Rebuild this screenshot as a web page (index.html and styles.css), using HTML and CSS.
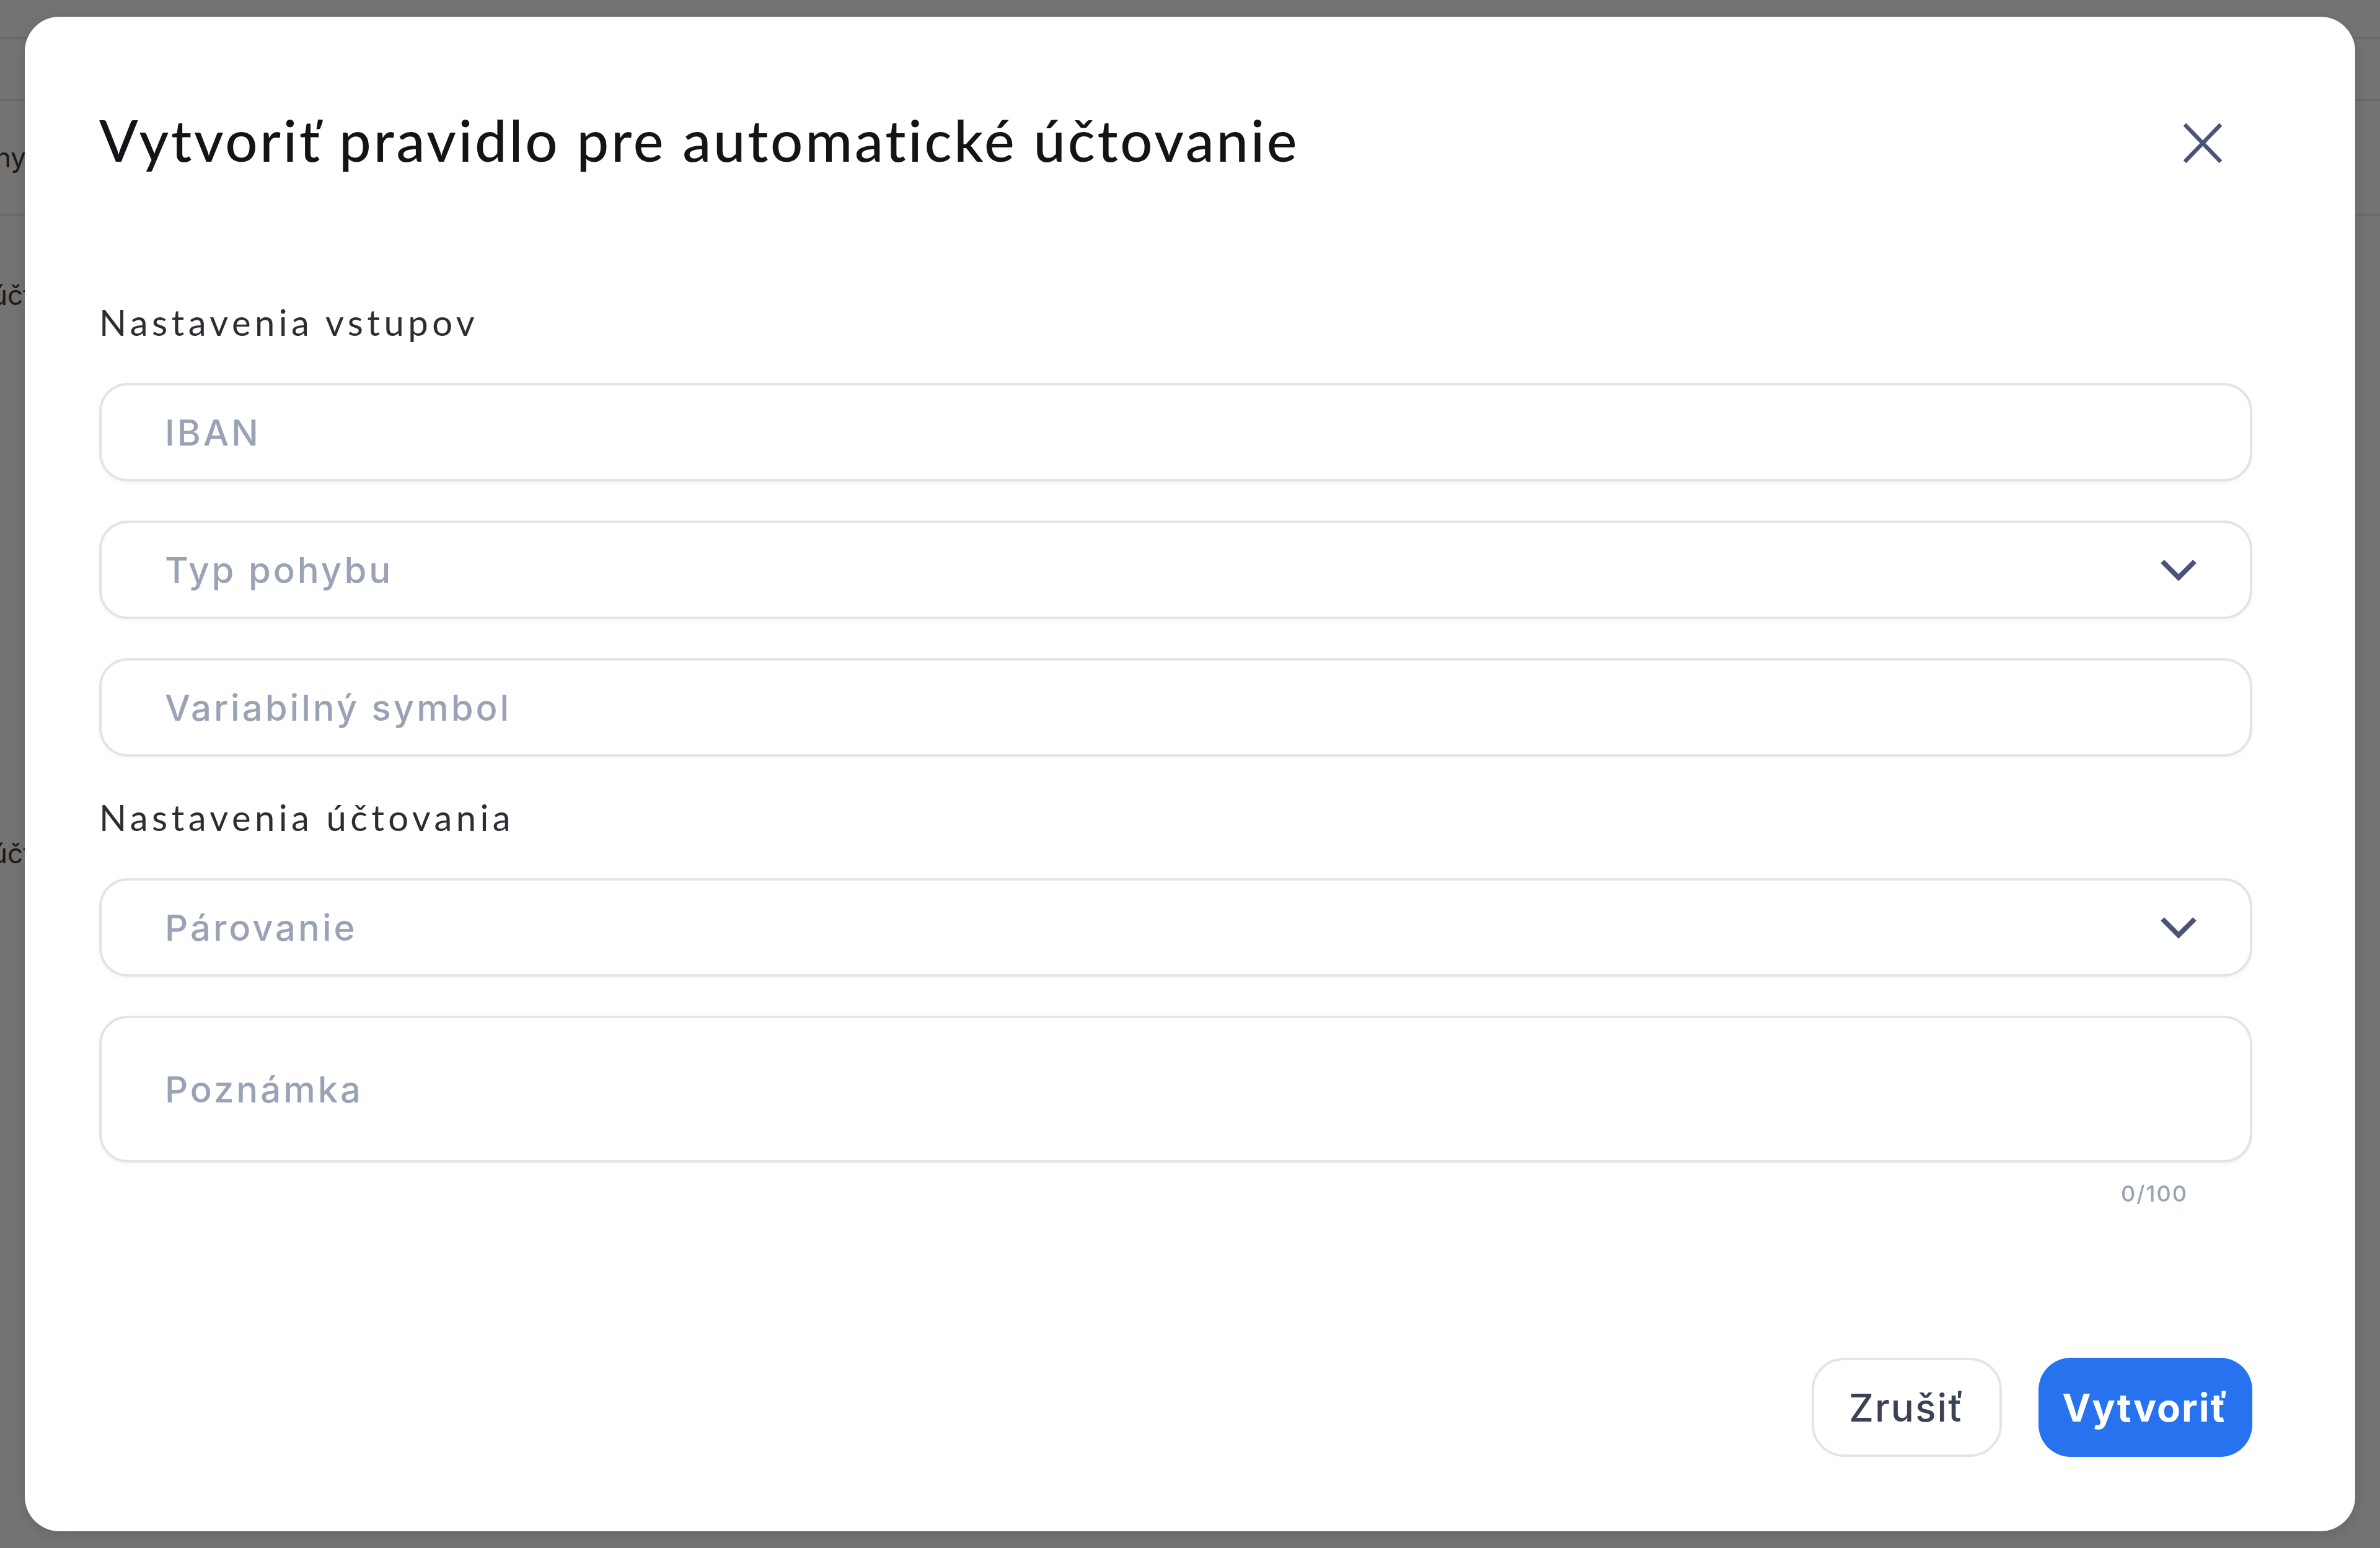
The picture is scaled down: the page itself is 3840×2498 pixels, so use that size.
FILE: index.html
```html
<!DOCTYPE html>
<html lang="sk">
<head>
  <meta charset="UTF-8" />
  <meta name="viewport" content="width=device-width, initial-scale=1" />
  <title>Automatické účtovanie</title>
  <link rel="stylesheet" href="styles.css">
</head>
<body>
  <!-- Page behind the modal -->
  <div class="page">
    <div class="page-topbar"></div>
    <div class="page-toolbar"></div>
    <div class="page-row page-row--bordered">
      <span class="page-cell page-cell--end">Zmeny</span>
    </div>
    <div class="page-row page-row--wide">
      <span class="page-cell page-cell--cut">účtovanie</span>
    </div>
    <div class="page-row page-row--tall">
      <span class="page-cell page-cell--cut">účtovné</span>
    </div>
  </div>

  <!-- Modal: new auto-booking rule -->
  <div class="overlay">
    <div class="dialog">
      <div class="dialog-header">
        <h2 class="dialog-title">Vytvoriť pravidlo pre automatické účtovanie</h2>
        <button class="close-btn" type="button" aria-label="Zavrieť">
          <svg width="68" height="70" viewBox="0 0 68 70">
            <path d="M5 5 L63 65 M63 5 L5 65" stroke="currentColor" stroke-width="6.5" fill="none" />
          </svg>
        </button>
      </div>

      <form class="dialog-form">
        <div class="section-label">Nastavenia vstupov</div>
        <input class="field" type="text" placeholder="IBAN">
        <div class="field select">
          <span class="placeholder">Typ pohybu</span>
          <svg class="chevron" width="60" height="37" viewBox="0 0 60 37">
            <polyline points="4,5 30,31 56,5" stroke="currentColor" stroke-width="8" fill="none" />
          </svg>
        </div>
        <input class="field" type="text" placeholder="Variabilný symbol">

        <div class="section-label">Nastavenia účtovania</div>
        <div class="field select">
          <span class="placeholder">Párovanie</span>
          <svg class="chevron" width="60" height="37" viewBox="0 0 60 37">
            <polyline points="4,5 30,31 56,5" stroke="currentColor" stroke-width="8" fill="none" />
          </svg>
        </div>
        <div class="note">
          <textarea class="field textarea" rows="1" maxlength="100" placeholder="Poznámka"></textarea>
          <div class="counter">0/100</div>
        </div>
      </form>

      <div class="dialog-footer">
        <button class="btn btn-secondary" type="button">Zrušiť</button>
        <button class="btn btn-primary" type="button">Vytvoriť</button>
      </div>
    </div>
  </div>
</body>
</html>
```

FILE: styles.css
```css
:root {
  --text-dark: #121418;
  --text-label: #2c2e33;
  --placeholder: #9aa2b6;
  --icon: #4a5476;
  --border: #e1e4e9;
  --primary: #2672ef;
  --overlay: rgba(0, 0, 0, 0.55);
}

html,
body {
  margin: 0;
  height: 100%;
}

body {
  font-family: 'Inter', 'Noto Sans', sans-serif;
  background: #fff;
  overflow: hidden;
}

/* Background page (mostly hidden by the modal) */
.page {
  display: flex;
  flex-direction: column;
  height: 100vh;
}

.page-topbar {
  height: 60px;
  border-bottom: 3px solid #e6e6e6;
}

.page-toolbar {
  height: 97px;
  border-bottom: 3px solid #e6e6e6;
}

.page-row {
  display: flex;
  align-items: center;
  height: 185px;
}

.page-row--bordered {
  height: 182px;
  border-bottom: 3px solid #e6e6e6;
}

.page-row--wide {
  height: 255px;
}

.page-row--tall {
  height: 1000px;
  align-items: flex-start;
  padding-top: 747px;
  box-sizing: border-box;
}

.page-cell {
  width: 42px;
  overflow: hidden;
  white-space: nowrap;
  font-size: 44px;
  color: #3c3c3c;
}

.page-cell--end {
  display: flex;
  justify-content: flex-end;
}

.page-cell--cut {
  text-indent: -14px;
}

/* Modal */
.overlay {
  position: fixed;
  inset: 0;
  background: var(--overlay);
  display: flex;
  align-items: center;
  justify-content: center;
}

.dialog {
  width: 3760px;
  height: 2444px;
  box-sizing: border-box;
  padding: 144px 166px 120px 120px;
  background: #fff;
  border-radius: 56px;
  box-shadow: 0 6px 24px rgba(0, 0, 0, 0.12);
  display: flex;
  flex-direction: column;
}

.dialog-header {
  display: flex;
  align-items: center;
  justify-content: space-between;
  height: 110px;
}

.dialog-title {
  margin: 0;
  font-family: 'Lato', 'Noto Sans', sans-serif;
  font-size: 92px;
  line-height: 110px;
  font-weight: 500;
  letter-spacing: 3.8px;
  color: var(--text-dark);
}

.close-btn {
  width: 160px;
  height: 110px;
  padding: 10px 0 0;
  border: none;
  background: none;
  color: var(--icon);
  display: flex;
  align-items: center;
  justify-content: center;
  cursor: pointer;
}

/* Form */
.dialog-form {
  margin-top: 204px;
  display: flex;
  flex-direction: column;
  gap: 63px;
}

.section-label {
  font-family: 'Lato', 'Noto Sans', sans-serif;
  font-size: 58px;
  line-height: 70px;
  letter-spacing: 6.4px;
  color: var(--text-label);
}

.field {
  box-sizing: border-box;
  width: 100%;
  height: 159px;
  margin: 0;
  padding: 0 102px;
  border: 4px solid var(--border);
  border-radius: 46px;
  background: #fff;
  box-shadow: 0 4px 6px rgba(16, 24, 40, 0.03);
  font-family: 'Inter', 'Noto Sans', sans-serif;
  font-size: 58px;
  font-weight: 500;
  letter-spacing: 4px;
  color: var(--text-dark);
  outline: none;
}

.field::placeholder,
.placeholder {
  color: var(--placeholder);
  opacity: 1;
}

.select {
  display: flex;
  align-items: center;
  justify-content: space-between;
  padding-right: 85px;
  cursor: pointer;
}

.chevron {
  color: var(--icon);
  flex-shrink: 0;
}

.note {
  display: flex;
  flex-direction: column;
  gap: 28px;
}

.textarea {
  display: block;
  height: 237px;
  padding-top: 80px;
  line-height: 70px;
  resize: none;
}

.counter {
  padding-right: 104px;
  text-align: right;
  font-size: 36px;
  line-height: 44px;
  font-weight: 500;
  letter-spacing: 2px;
  color: var(--placeholder);
}

/* Footer buttons */
.dialog-footer {
  margin-top: auto;
  display: flex;
  justify-content: flex-end;
  gap: 59px;
}

.btn {
  box-sizing: border-box;
  height: 160px;
  border-radius: 52px;
  font-family: 'Inter', 'Noto Sans', sans-serif;
  font-size: 62px;
  letter-spacing: 2px;
  cursor: pointer;
}

.btn-secondary {
  width: 307px;
  border: 4px solid var(--border);
  background: #fff;
  color: #3b4256;
  font-weight: 500;
}

.btn-primary {
  width: 345px;
  border: none;
  background: var(--primary);
  color: #fff;
  font-weight: 700;
}
```
